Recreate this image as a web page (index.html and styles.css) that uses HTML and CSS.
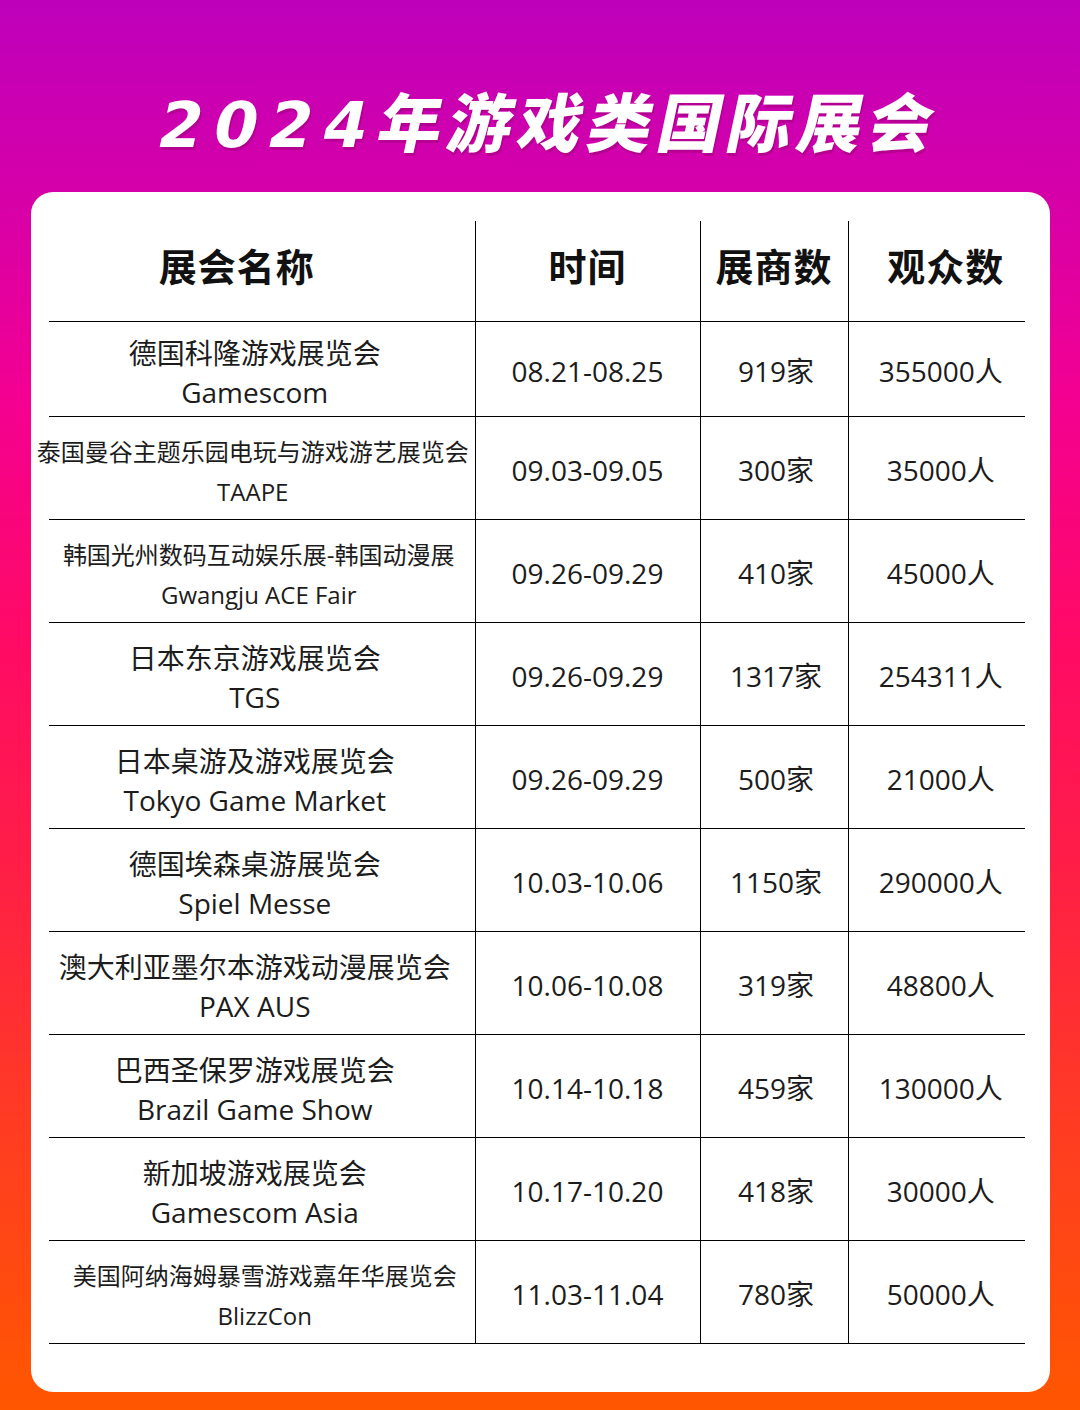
FILE: index.html
```html
<!DOCTYPE html>
<html lang="zh-CN">
<head>
<meta charset="utf-8">
<title>2024年游戏类国际展会</title>
<link rel="stylesheet" href="styles.css">
</head>
<body>
<div class="page">
  <header class="hero">
    <h1 class="title"><span class="digits">2024</span><span class="cjk">年游戏类国际展会</span></h1>
  </header>
  <section class="card">
    <table class="expo">
      <colgroup>
        <col class="c-name"><col class="c-date"><col class="c-exh"><col class="c-aud">
      </colgroup>
      <thead>
        <tr class="head-row">
          <th class="name">展会名称</th>
          <th>时间</th>
          <th>展商数</th>
          <th class="aud">观众数</th>
        </tr>
      </thead>
      <tbody>
        <tr class="first">
          <td class="name"><div>德国科隆游戏展览会</div><div>Gamescom</div></td>
          <td>08.21-08.25</td><td class="exh">919家</td><td class="aud">355000人</td>
        </tr>
        <tr>
          <td class="name small longest"><div>泰国曼谷主题乐园电玩与游戏游艺展览会</div><div>TAAPE</div></td>
          <td>09.03-09.05</td><td class="exh">300家</td><td class="aud">35000人</td>
        </tr>
        <tr>
          <td class="name small"><div>韩国光州数码互动娱乐展-韩国动漫展</div><div>Gwangju ACE Fair</div></td>
          <td>09.26-09.29</td><td class="exh">410家</td><td class="aud">45000人</td>
        </tr>
        <tr>
          <td class="name"><div>日本东京游戏展览会</div><div>TGS</div></td>
          <td>09.26-09.29</td><td class="exh">1317家</td><td class="aud">254311人</td>
        </tr>
        <tr>
          <td class="name"><div>日本桌游及游戏展览会</div><div>Tokyo Game Market</div></td>
          <td>09.26-09.29</td><td class="exh">500家</td><td class="aud">21000人</td>
        </tr>
        <tr>
          <td class="name"><div>德国埃森桌游展览会</div><div>Spiel Messe</div></td>
          <td>10.03-10.06</td><td class="exh">1150家</td><td class="aud">290000人</td>
        </tr>
        <tr>
          <td class="name"><div>澳大利亚墨尔本游戏动漫展览会</div><div>PAX AUS</div></td>
          <td>10.06-10.08</td><td class="exh">319家</td><td class="aud">48800人</td>
        </tr>
        <tr>
          <td class="name"><div>巴西圣保罗游戏展览会</div><div>Brazil Game Show</div></td>
          <td>10.14-10.18</td><td class="exh">459家</td><td class="aud">130000人</td>
        </tr>
        <tr>
          <td class="name"><div>新加坡游戏展览会</div><div>Gamescom Asia</div></td>
          <td>10.17-10.20</td><td class="exh">418家</td><td class="aud">30000人</td>
        </tr>
        <tr>
          <td class="name small shifted"><div>美国阿纳海姆暴雪游戏嘉年华展览会</div><div>BlizzCon</div></td>
          <td>11.03-11.04</td><td class="exh">780家</td><td class="aud">50000人</td>
        </tr>
      </tbody>
    </table>
  </section>
</div>
</body>
</html>
```

FILE: styles.css
```css
* { box-sizing: border-box; }
html, body { margin: 0; padding: 0; }
body {
  width: 1080px;
  height: 1410px;
  overflow: hidden;
  background: linear-gradient(180deg, #be00bb 0%, #d600a8 14%, #f30092 28%, #ff0a66 45%, #ff1f45 62%, #ff3c22 80%, #ff5700 100%);
  font-family: "Open Sans", "Noto Sans CJK SC", sans-serif;
  color: #1c1c1c;
}
.page { width: 1080px; height: 1410px; }
.hero {
  height: 192px;
  padding-top: 86px;
  text-align: center;
}
.title {
  display: inline-block;
  margin: 0 0 0 20px;
  color: #fff;
  font-size: 64px;
  line-height: 66px;
  font-weight: 900;
  transform: skewX(-12deg);
  text-shadow: 2px 3px 0 rgba(150, 0, 110, 0.45);
  white-space: nowrap;
}
.digits {
  font-family: "DejaVu Sans", sans-serif;
  font-weight: 700;
  font-size: 63px;
  letter-spacing: 11px;
}
.cjk {
  font-family: "Noto Sans CJK SC", sans-serif;
  font-weight: 900;
  letter-spacing: 6px;
}
.card {
  margin: 0 30px 0 31px;
  height: 1200px;
  background: #fff;
  border-radius: 22px;
  padding: 29px 25px 0 18px;
}
.expo {
  width: 976px;
  table-layout: fixed;
  border-collapse: collapse;
}
.c-name { width: 426px; }
.c-date { width: 225px; }
.c-exh { width: 148px; }
.c-aud { width: 177px; }
.expo th, .expo td {
  border-bottom: 1px solid #000;
  border-left: 1px solid #000;
  text-align: center;
  vertical-align: middle;
  padding: 0;
  white-space: nowrap;
}
.expo th.name, .expo td.name { border-left: none; }
.expo th {
  height: 100px;
  font-family: "Noto Sans CJK SC", sans-serif;
  font-size: 38px;
  font-weight: 700;
  color: #111;
  padding-bottom: 12px;
  letter-spacing: 1px;
}
.expo th.name { padding-right: 50px; }
.expo th.aud { padding-left: 18px; }
.expo td {
  height: 103px;
  font-size: 28px;
  line-height: 39px;
  padding-top: 5px;
}
.expo tr.first td { height: 95px; }
.expo td.name { padding-right: 14px; padding-top: 8px; }
.expo td.name div { margin: 0 -24px; }
.expo td.name.small { font-size: 24px; line-height: 40px; padding-right: 6px; }
.expo td.name.small.longest { padding-right: 18px; }
.expo td.name.small.shifted { padding-left: 6px; padding-right: 0; }
.expo td.exh { padding-left: 4px; }
.expo td.aud { padding-left: 8px; }
```
